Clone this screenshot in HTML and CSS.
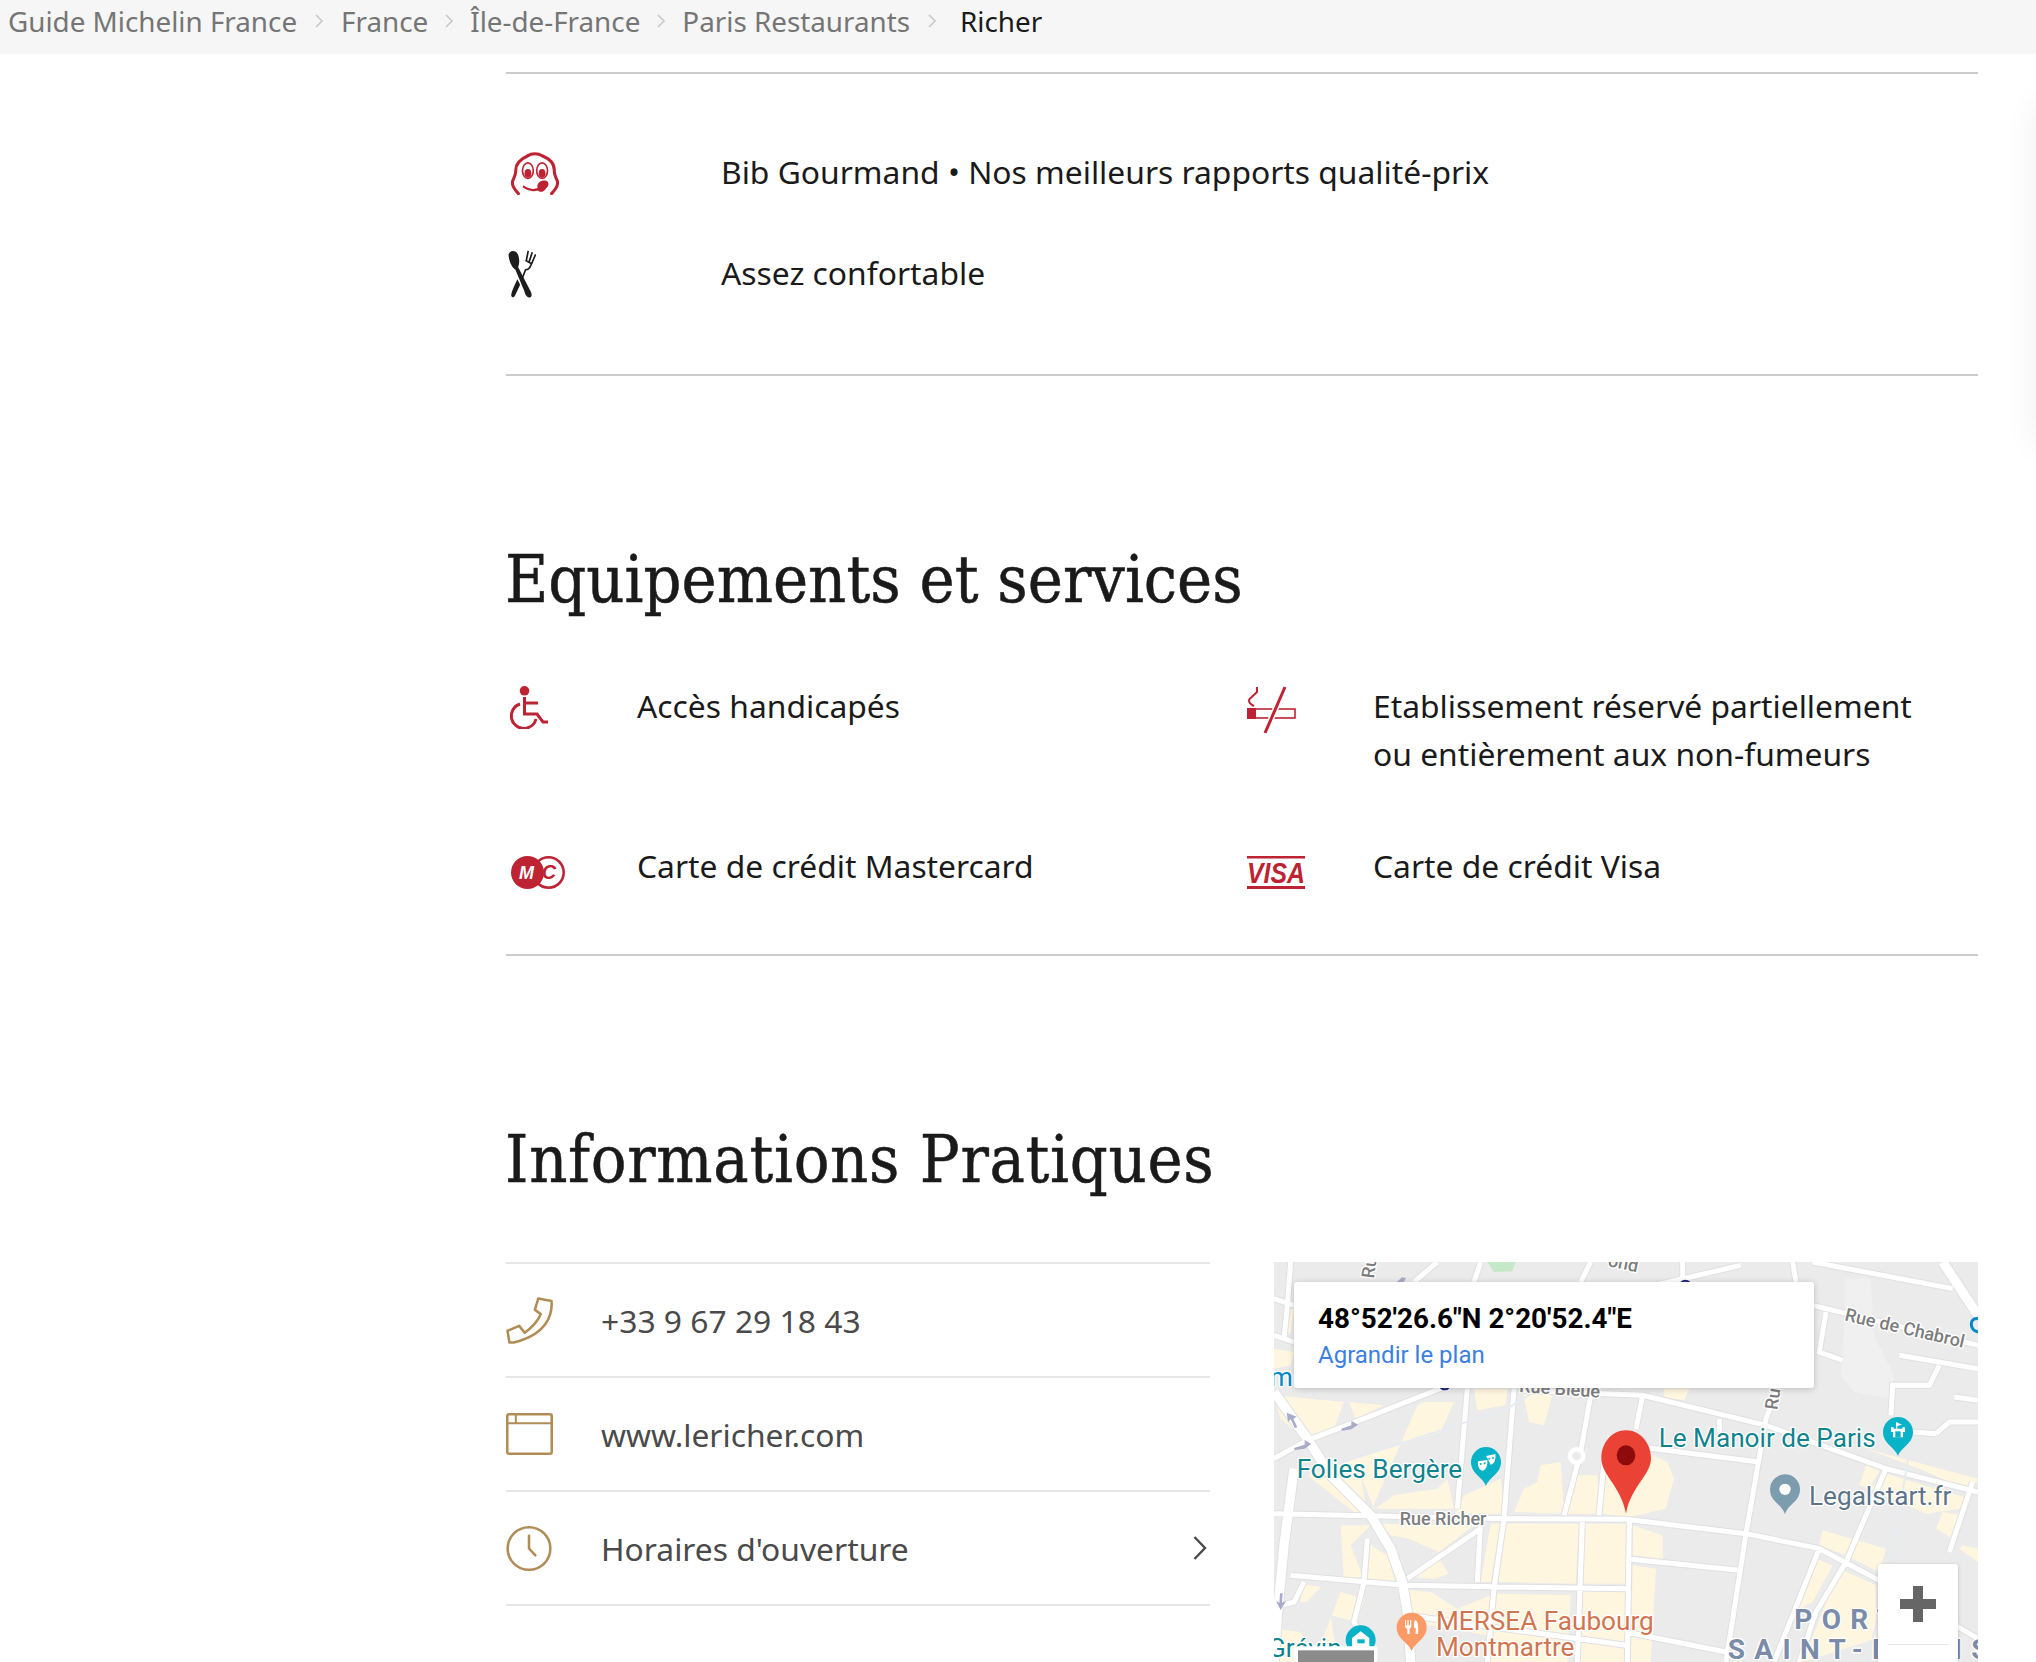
FILE: index.html
```html
<!DOCTYPE html>
<html lang="fr">
<head>
<meta charset="utf-8">
<title>Richer</title>
<link rel="stylesheet" href="styles.css">
</head>
<body>
<nav class="crumbs">
  <a class="crumb">Guide Michelin France</a>
  <svg class="crumb-sep" viewBox="0 0 8 14"><path d="M1 1l6 6-6 6"/></svg>
  <a class="crumb">France</a>
  <svg class="crumb-sep tight" viewBox="0 0 8 14"><path d="M1 1l6 6-6 6"/></svg>
  <a class="crumb">Île-de-France</a>
  <svg class="crumb-sep tight" viewBox="0 0 8 14"><path d="M1 1l6 6-6 6"/></svg>
  <a class="crumb">Paris Restaurants</a>
  <svg class="crumb-sep" viewBox="0 0 8 14"><path d="M1 1l6 6-6 6"/></svg>
  <span class="crumb current">Richer</span>
</nav>
<div class="side-shadow"></div>
<main class="main">
  <section class="awards">
    <div class="award-row">
      <svg class="ic-bib" viewBox="0 0 142 130"><path class="red-line" d="M22 126C8 112 2 98 5 88C10 76 14 70 14 60C12 34 32 22 50 14C60 6 80 6 92 14C112 22 130 34 128 60C128 70 132 76 137 88C140 98 134 112 120 126"/><ellipse class="eye" cx="50" cy="58" rx="16" ry="23"/><ellipse class="eye" cx="92" cy="58" rx="16" ry="23"/><ellipse class="red-fill" cx="50" cy="66" rx="10" ry="13"/><ellipse class="red-fill" cx="92" cy="66" rx="10" ry="13"/><path class="mouth" d="M38 106C58 120 72 118 104 104"/><path class="red-fill" d="M78 104C78 92 92 84 104 88C114 92 112 104 104 110C98 122 84 124 80 116Z"/></svg>
      <p class="award-text">Bib Gourmand • Nos meilleurs rapports qualité-prix</p>
    </div>
    <div class="award-row">
      <svg class="ic-cutlery" viewBox="0 0 83 141"><path class="dark-fill" d="M2 18C0 6 12-2 22 4C34 12 36 36 30 50L68 124C72 134 70 141 62 140C54 138 50 128 48 120L22 58C10 50 4 32 2 18Z"/><path class="dark-line" d="M60 2L54 32M72 6L62 36M82 12L70 40M52 30L62 36L70 40L64 52C60 58 56 58 52 58L42 84"/><path class="dark-fill" d="M28 86L36 102L22 132C18 141 12 142 10 136C8 128 18 106 28 86Z"/></svg>
      <p class="award-text">Assez confortable</p>
    </div>
  </section>

  <h2 class="section-title">Equipements et services</h2>
  <section class="services">
    <svg class="ic-wheel" viewBox="0 0 39 43"><circle class="red-fill" cx="14.5" cy="4.8" r="4.8"/><path class="red-line3" d="M14.5 11V28H27L33 36H38M14.5 17H28"/><path class="red-line3" d="M10 18A12.5 12.5 0 1 0 26 33"/></svg>
    <p class="service-text">Accès handicapés</p>
    <svg class="ic-smoke" viewBox="0 0 49 47"><path class="red-line2" d="M10 1V6L2.5 13C1 16 3 18 7 20"/><rect class="red-thin" x="1" y="23" width="47" height="9"/><rect class="red-fill" x="0" y="22" width="9" height="11"/><path class="gap-line" d="M38 1L18 47"/><path class="red-line3" d="M38 1L18 47"/></svg>
    <p class="service-text">Etablissement réservé partiellement<br>ou entièrement aux non-fumeurs</p>
    <svg class="ic-mc" viewBox="0 0 54 33"><circle class="mc-ring" cx="37.5" cy="16.5" r="15.2"/><circle class="red-fill" cx="16.5" cy="16.5" r="16.5"/><text class="mc-m" x="15.5" y="22.5">M</text><text class="mc-c" x="38" y="23">C</text></svg>
    <p class="service-text">Carte de crédit Mastercard</p>
    <svg class="ic-visa" viewBox="0 0 58 33"><rect class="red-fill" width="58" height="2.5"/><rect class="red-fill" y="30" width="58" height="3"/><text class="visa-word" x="0" y="26.5" textLength="58" lengthAdjust="spacingAndGlyphs">VISA</text></svg>
    <p class="service-text">Carte de crédit Visa</p>
  </section>

  <h2 class="section-title wide">Informations Pratiques</h2>
  <section class="practical">
    <ul class="info-list">
      <li class="info-row">
        <svg class="ic-info" viewBox="0 0 48 48"><path class="gold-line" d="M33 1.5L46.5 4C47.5 18 42 38 8 46.5L3.5 46.5L1.5 34.5L13.5 29.5L19 36.5C26 32 33 24 35.5 17.5L29.5 13Z"/></svg>
        <span class="info-text">+33 9 67 29 18 43</span>
      </li>
      <li class="info-row">
        <svg class="ic-info" viewBox="0 0 48 44"><rect class="gold-line" x="1.3" y="1.3" width="45.4" height="40.4" rx="2"/><path class="gold-thin" d="M1 10.5H47M10 1V10.5"/></svg>
        <span class="info-text">www.lericher.com</span>
      </li>
      <li class="info-row">
        <svg class="ic-info" viewBox="0 0 48 48"><circle class="gold-line" cx="23.5" cy="24" r="21.8"/><path class="gold-line" d="M23.5 11V24L30 31"/></svg>
        <span class="info-text">Horaires d'ouverture</span>
        <svg class="ic-chev" viewBox="0 0 14 24"><path d="M1.5 1L12 12L1.5 23"/></svg>
      </li>
    </ul>
    <div class="map">
      <svg class="map-canvas" viewBox="0 0 2112 1200">
        <rect class="m-base" width="2112" height="1200"/>
        <g class="m-yellow">
          <path d="M0 260L60 270L50 310L0 320Z"/>
          <path d="M30 140L60 140L50 215L30 210Z"/>
          <path d="M0 400L210 420L180 500L90 530L20 470Z"/>
          <path d="M225 420L330 430L245 470Z"/>
          <path d="M100 640L250 590L280 750L240 750Z"/>
          <path d="M240 590L500 510L540 420L450 420L430 430L290 750L360 700L490 680L520 650L540 740H300Z"/>
          <path d="M600 380L700 380L695 430L610 445Z"/>
          <path d="M745 380L840 380L810 490L765 480Z"/>
          <path d="M570 700L680 650L690 755L545 755Z"/>
          <path d="M720 750L750 680L790 660L800 610L860 600L870 755Z"/>
          <path d="M880 755L900 640L970 640L975 755Z"/>
          <path d="M985 755L1000 520L1180 600L1200 650L1175 740L1070 765Z"/>
          <path d="M690 785H915L905 965L670 960Z"/>
          <path d="M935 785H1060L1055 965H925Z"/>
          <path d="M650 785H680L650 960H620Z"/>
          <path d="M320 785L600 790L495 870L405 830L350 820Z"/>
          <path d="M495 890L525 935L480 950L420 945Z"/>
          <path d="M200 790H290L230 850L275 970L210 960Z"/>
          <path d="M290 850L340 880L370 980L280 960Z"/>
          <path d="M400 985L470 990L550 1040L650 1000L660 990L640 1120L410 1080Z"/>
          <path d="M670 995L890 1000L880 1200H640Z"/>
          <path d="M920 985H1056L1060 1200H900Z"/>
          <path d="M80 965L140 975L100 1020H80Z"/>
          <path d="M200 990L270 1010L250 1080L170 1060L190 1200H120Z"/>
          <path d="M0 1100L80 1110L120 1200H0Z"/>
          <path d="M1076 790L1166 820V890L1076 880Z"/>
          <path d="M1076 910L1146 920L1130 1200H1070Z"/>
          <path d="M1171 380H1246L1231 415L1171 405Z"/>
          <path d="M1776 560L2112 650L2096 690L1936 620Z"/>
          <path d="M1756 670L1776 610L1816 625L1786 680Z"/>
          <path d="M1836 635L2086 710L2056 740L1956 755L1786 680Z"/>
          <path d="M2006 750L2066 760L2036 830L1986 800Z"/>
          <path d="M1646 805L1836 860L1816 930L1716 880L1636 850Z"/>
          <path d="M1626 890L1676 910L1616 1020L1576 1040Z"/>
          <path d="M1696 920L1806 970V1130L1586 1200Z"/>
          <path d="M2066 850L2112 860V900L2056 860Z"/>
        </g>
        <path class="m-white-patch" d="M1716 50H1790L1800 220L1860 340L1850 410L1740 390L1700 340L1710 220Z"/>
        <path class="m-green" d="M640 0H725L715 28L660 30Z"/>
        <g class="m-road-case">
          <path id="r" d="M0 755L700 770L1056 772L1416 815L1636 860L1806 950L2112 1130M0 590L100 535L270 470L510 375M0 390L100 530L170 640L290 760L350 860L385 960L400 1050L410 1200M60 620L30 850L10 1060L0 1200M580 380L550 740M720 380L690 770L660 980L640 1200M950 400L920 570L870 760M990 600L975 760M620 780L610 960M925 780L910 1200M620 800L400 950M50 940L390 970L1056 980M1056 890L1396 925M1066 780L1060 1200M1506 390L1476 470L1416 815L1356 1200M740 385L1106 400L1476 490L1836 620L2112 690M1106 400L1086 500M1056 550L1456 600M1336 470L1336 510M1836 620L1716 900L1626 1050L1576 1200M2096 660L2026 870M1616 130L2112 250M1656 150L1636 270L1706 295M1876 280L2112 320M1996 310L1966 370L1856 370L1851 460M2041 405L2112 415M1986 515L2026 480L2112 480M1916 510L1986 515M90 960L60 1020L20 1030M280 830L270 960L240 1080L300 1200M400 1060L1056 1150M1056 1110L1356 1170M1616 0L2036 80M1556 0L1566 60M1226 0L1226 50M1056 90L1400 10M50 0L40 130L30 230M0 110L60 130M0 220L60 240M420 60L490 0M620 0L600 60M920 60L950 0M1636 860L1500 1200"/>
        </g>
        <path class="m-road-wide-case" d="M0 390L100 530L170 640L290 760L350 860L385 960L400 1050L410 1200M60 620L30 850L10 1060L0 1200M2006 0L2112 160"/>
        <use href="#r" class="m-road"/>
        <path class="m-road-wide" d="M0 390L100 530L170 640L290 760L350 860L385 960L400 1050L410 1200M60 620L30 850L10 1060L0 1200M2006 0L2112 160"/>
        <path class="m-faint" d="M240 590L700 440L770 395M1916 510L1850 900L1780 1200"/>
        <circle class="m-ring" cx="908" cy="582" r="20"/>
        <g class="m-arrows">
          <path d="M38 452L68 464L58 470L70 496L62 498L50 472L42 480Z"/>
          <path d="M60 558L92 548V534L112 546L92 560L62 564Z"/>
          <path d="M202 500L232 490V476L252 488L232 502L204 506Z"/>
          <path d="M366 62L384 46L396 48L388 62Z"/>
          <path d="M6 1018L16 1022L18 994H26L24 1022L36 1018L20 1044Z"/>
        </g>
        <circle class="m-metro" cx="512" cy="366" r="16"/>
        <circle class="m-metro" cx="1234" cy="72" r="16"/>
        <path class="m-blue-arc" d="M2112 170C2085 165 2085 205 2112 210"/>
        <text class="m-label m-blue" x="-12" y="372">me</text>
        <text class="m-label m-street" transform="translate(735 390) rotate(4)">Rue Bleue</text>
        <text class="m-label m-street" transform="translate(300 50) rotate(-83)">Ru</text>
        <text class="m-label m-street" transform="translate(1510 445) rotate(-82)">Ru</text>
        <text class="m-label m-street" transform="translate(1710 175) rotate(13)">Rue de Chabrol</text>
        <text class="m-label m-street" transform="translate(1000 12) rotate(12)">ond</text>
        <text class="m-label m-street" x="377" y="790">Rue Richer</text>
        <text class="m-label m-teal" x="68" y="648">Folies Bergère</text>
        <text class="m-label m-teal" x="1154" y="556">Le Manoir de Paris</text>
        <text class="m-label m-slate" x="1605" y="729">Legalstart.fr</text>
        <text class="m-label m-orange" x="486" y="1105">MERSEA Faubourg</text>
        <text class="m-label m-orange" x="486" y="1183">Montmartre</text>
        <text class="m-label m-teal" x="-18" y="1185">Grévin</text>
        <text class="m-label m-district" x="1561" y="1100">PORT</text>
        <text class="m-label m-district" x="1361" y="1190">SAINT-DENIS</text>
        <g class="m-pin-teal">
          <path d="M636 672C626 645 591 635 591 600A45 45 0 0 1 681 600C681 635 646 645 636 672Z"/>
          <path d="M1872 582C1862 555 1827 545 1827 510A45 45 0 0 1 1917 510C1917 545 1882 555 1872 582Z"/>
          <path d="M260 1200C250 1170 215 1165 215 1135A45 45 0 0 1 305 1135C305 1165 270 1170 260 1200Z"/>
        </g>
        <g class="m-white">
          <path d="M612 598L640 594C642 612 634 626 625 626C616 626 610 612 612 598Z"/>
          <path d="M636 582L664 576C666 592 662 606 650 608L641 590Z"/>
          <path d="M1866 480L1884 488L1870 492V500H1885V496H1893V510H1887V526H1857V510H1851V496H1859V500H1866Z"/>
          <path d="M260 1108L286 1128V1158H234V1128Z"/>
        </g>
        <g class="m-teal-fill">
          <rect x="250" y="1132" width="22" height="12"/>
          <circle cx="620" cy="606" r="3"/><circle cx="632" cy="604" r="3"/>
          <circle cx="646" cy="590" r="3"/><circle cx="657" cy="588" r="3"/>
          <rect x="1864" y="508" width="16" height="18"/>
        </g>
        <path class="m-pin-slate" d="M1533 757C1523 725 1488 720 1488 682A45 45 0 0 1 1578 682C1578 720 1543 725 1533 757Z"/>
        <circle class="m-white" cx="1533" cy="682" r="17"/>
        <path class="m-pin-orange" d="M413 1167C403 1140 368 1130 368 1097A45 45 0 0 1 458 1097C458 1130 423 1140 413 1167Z"/>
        <path class="m-white" d="M396 1074V1090H400V1074H404V1090H408V1074H412V1092C412 1098 408 1100 407 1100V1116H400V1100C397 1100 393 1098 393 1092V1074ZM424 1074C432 1078 434 1092 432 1116H425V1098H420C420 1086 420 1078 424 1074Z"/>
        <path class="m-pin-red" d="M1056 505C1012 505 982 545 982 588C982 640 1040 670 1056 755C1072 670 1131 640 1131 588C1131 545 1100 505 1056 505Z"/>
        <ellipse class="m-pin-core" cx="1056" cy="580" rx="28" ry="30"/>
        <rect class="m-white" x="60" y="1153" width="250" height="47" rx="6"/>
        <rect class="m-thumb" x="72" y="1165" width="228" height="35"/>
      </svg>
      <div class="map-card">
        <strong class="map-coord">48°52'26.6"N 2°20'52.4"E</strong>
        <a class="map-link">Agrandir le plan</a>
      </div>
      <div class="zoom-ctl">
        <svg class="zoom-plus" viewBox="0 0 36 36"><path d="M13 0H23V13H36V23H23V36H13V23H0V13H13Z"/></svg>
        <div class="zoom-div"></div>
      </div>
    </div>
  </section>
</main>
</body>
</html>
```

FILE: styles.css
```css
html, body { margin: 0; padding: 0; height: 1662px; overflow: hidden; background: #fff; }
body { font-family: "Noto Sans", "Open Sans", sans-serif; color: #1a1a1a; position: relative; }
p, h2, ul { margin: 0; padding: 0; }
ul { list-style: none; }

.crumbs { height: 54px; box-sizing: border-box; padding: 0 0 13px 8px; background: #f6f6f6; display: flex; align-items: center; font-size: 27.8px; color: #757575; gap: 16px; }
.crumb-sep { width: 10px; height: 14px; margin: 0 1px; fill: none; stroke: #c8c8c8; stroke-width: 1.6; }
.crumb-sep.tight { margin: 0; }
.crumb.current { color: #1a1a1a; margin-left: 6px; }

.side-shadow { position: absolute; left: 2040px; top: 110px; width: 30px; height: 330px; box-shadow: 0 0 34px 4px rgba(0,0,0,.07); }

.main { margin: 18px 58px 0 506px; }
.awards { border-top: 2px solid #ccc; border-bottom: 2px solid #ccc; padding: 48px 0 50px; }
.award-row { height: 101px; display: grid; grid-template-columns: 215px 1fr; align-items: center; font-size: 31.8px; }
.award-text { line-height: 48px; margin-bottom: 2px; }

.section-title { font-family: "DejaVu Serif Condensed", "DejaVu Serif", serif; font-weight: 400; font-size: 66px; line-height: 80px; color: #1a1a1a; margin: 164px 0 0 -1px; -webkit-text-stroke: 0.5px #1a1a1a; }
.section-title.wide { letter-spacing: 0.7px; }

.services { display: grid; grid-template-columns: 131px 608px 128px 1fr; row-gap: 64px; margin-top: 61px; padding: 0 0 65px; border-bottom: 2px solid #ccc; font-size: 31.8px; }
.service-text { line-height: 48px; position: relative; top: 1px; }

.practical { display: grid; grid-template-columns: 704px 704px; column-gap: 64px; margin-top: 62px; }
.info-row { height: 112px; border-top: 2px solid #e6e6e6; display: flex; align-items: center; font-size: 31.8px; color: #4a4a4a; }
.info-row:last-child { border-bottom: 2px solid #e6e6e6; }
.info-text { margin-left: 48px; flex: 1; }
.ic-info { width: 47px; height: 47px; fill: none; }
.ic-chev { width: 14px; height: 24px; fill: none; stroke: #4a4a4a; stroke-width: 2.4; margin-right: 3px; }

.ic-bib { width: 48px; height: 44px; margin-left: 5px; }
.ic-cutlery { width: 28px; height: 48px; margin-left: 2px; }
.ic-wheel { width: 39px; height: 43px; margin: 5px 0 0 4px; }
.ic-smoke { width: 49px; height: 47px; margin: 5px 0 0 2px; }
.ic-mc { width: 54px; height: 33px; margin: 15px 0 0 5px; }
.ic-visa { width: 58px; height: 33px; margin: 15px 0 0 2px; }

.red-fill { fill: #bd2333; }
.red-line { fill: none; stroke: #bd2333; stroke-width: 9; stroke-linecap: round; stroke-linejoin: round; }
.red-line2 { fill: none; stroke: #bd2333; stroke-width: 2; }
.red-line3 { fill: none; stroke: #bd2333; stroke-width: 3; }
.red-thin { fill: #fff; stroke: #bd2333; stroke-width: 1.6; }
.gap-line { fill: none; stroke: #fff; stroke-width: 6; }
.eye { fill: #fff; stroke: #bd2333; stroke-width: 5; }
.mouth { fill: none; stroke: #bd2333; stroke-width: 7; stroke-linecap: round; }
.dark-fill { fill: #1c1c1c; }
.dark-line { fill: none; stroke: #1c1c1c; stroke-width: 5; stroke-linejoin: round; }
.mc-ring { fill: #fff; stroke: #bd2333; stroke-width: 2.6; }
.mc-m { font: italic 700 18px "Liberation Sans", sans-serif; fill: #fff; text-anchor: middle; }
.mc-c { font: italic 700 20px "Liberation Sans", sans-serif; fill: #bd2333; text-anchor: middle; }
.visa-word { font: italic 700 29px "Liberation Sans", sans-serif; fill: #bd2333; }
.gold-line { fill: none; stroke: #b08d57; stroke-width: 2.6; stroke-linejoin: round; stroke-linecap: round; }
.gold-thin { fill: none; stroke: #b08d57; stroke-width: 2; }

.map { position: relative; width: 704px; height: 400px; overflow: hidden; }
.map-canvas { display: block; width: 704px; height: 400px; font-family: Roboto, sans-serif; }
.m-base { fill: #ebebeb; }
.m-yellow { fill: #fff6df; }
.m-white-patch { fill: #f0f0f0; }
.m-green { fill: #c5e8c9; }
.m-road-case { fill: none; stroke: #e0e0e4; stroke-width: 21; }
.m-road-wide-case { fill: none; stroke: #e0e0e4; stroke-width: 34; }
.m-road { fill: none; stroke: #fff; stroke-width: 15; }
.m-road-wide { fill: none; stroke: #fff; stroke-width: 28; }
.m-faint { fill: none; stroke: #e6ebf3; stroke-width: 6; }
.m-ring { fill: #ebebeb; stroke: #fff; stroke-width: 14; }
.m-arrows { fill: #a9abc9; }
.m-metro { fill: #fff; stroke: #1a237e; stroke-width: 6; }
.m-blue-arc { fill: none; stroke: #0288c7; stroke-width: 9; }
.m-label { stroke: #fff; stroke-width: 8; paint-order: stroke; stroke-linejoin: round; }
.m-blue { font-size: 78px; fill: #0288c7; }
.m-street { font-size: 54px; font-weight: 500; fill: #7d7d7d; }
.m-teal { font-size: 78.5px; fill: #0f848e; }
.m-slate { font-size: 78.5px; fill: #5d7488; }
.m-orange { font-size: 78.5px; fill: #cf7650; }
.m-district { font-size: 84px; font-weight: 700; fill: #7b8ca8; letter-spacing: 28px; }
.m-pin-teal { fill: #08b2c7; }
.m-white { fill: #fff; }
.m-teal-fill { fill: #08b2c7; }
.m-pin-slate { fill: #7b9dae; }
.m-pin-orange { fill: #fd9a66; }
.m-pin-red { fill: #ea4335; }
.m-pin-core { fill: #8e0b0b; }
.m-thumb { fill: #8b8b8b; }

.map-card { position: absolute; left: 20px; top: 20px; width: 496px; height: 89px; padding: 17px 0 0 24px; background: #fff; border-radius: 3px; box-shadow: 0 1px 6px rgba(0,0,0,.2); font-family: Roboto, sans-serif; display: flex; flex-direction: column; }
.map-coord { font-size: 27.8px; font-weight: 700; color: #000; line-height: 40px; }
.map-link { font-size: 24px; color: #3b7fe0; line-height: 33px; }

.zoom-ctl { position: absolute; left: 604px; top: 302px; width: 80px; height: 98px; background: #fff; border-radius: 3px 3px 0 0; box-shadow: 0 1px 4px rgba(0,0,0,.2); display: flex; flex-direction: column; align-items: center; }
.zoom-plus { width: 36px; height: 36px; margin-top: 22px; fill: #666; }
.zoom-div { width: 60px; height: 1px; background: #e6e6e6; margin-top: 22px; }
```
